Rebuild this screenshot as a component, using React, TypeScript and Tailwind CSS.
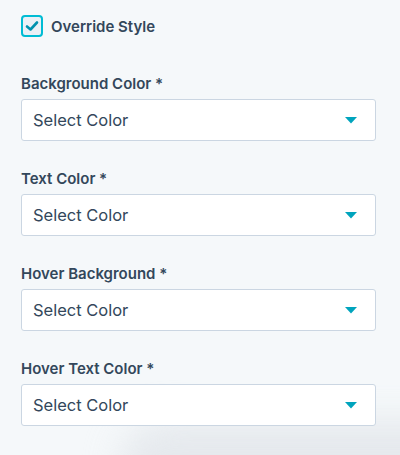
import React from "react";

const fields = ["Background Color *", "Text Color *", "Hover Background *", "Hover Text Color *"];

function Caret() {
  return (
    <svg width="12" height="7" viewBox="0 0 12 7" className="shrink-0">
      <path d="M0 0 L12 0 L6 6.5 Z" fill="#00a4bd" />
    </svg>
  );
}

export default function App() {
  return (
    <div
      className="relative w-[400px] h-[455px] overflow-hidden bg-[#f5f8fa] text-[#33475b]"
      style={{ fontFamily: "Inter, 'Open Sans', sans-serif" }}
    >
      <div className="pointer-events-none absolute left-[120px] top-[420px] w-[420px] h-[90px] rounded-full bg-[#dfe3e8] blur-[18px] opacity-70" />
      <div className="relative flex flex-col px-[21px] pt-[15px]">
        <label className="flex items-center gap-[8px] h-[22px]">
          <span className="flex items-center justify-center w-[22px] h-[22px] rounded-[4px] border-2 border-[#00bcd4] bg-[#eaf0f6]">
            <svg width="14" height="12" viewBox="0 0 14 12">
              <path d="M2 6.5 L5.5 9.5 L12 2.5" fill="none" stroke="#0091ae" strokeWidth="2.6" strokeLinecap="round" strokeLinejoin="round" />
            </svg>
          </span>
          <span className="text-[15px] font-semibold leading-none">Override Style</span>
        </label>
        <div className="flex flex-col gap-[29px] mt-[38px]">
          {fields.map((f) => (
            <div key={f} className="flex flex-col">
              <div className="text-[15px] font-semibold leading-[18px] h-[18px]">{f}</div>
              <div className="mt-[6px] flex items-center justify-between h-[42px] w-[355px] rounded-[3px] border border-[#cbd6e2] bg-white pl-[11px] pr-[18px]">
                <span className="text-[16.5px] leading-none">Select Color</span>
                <Caret />
              </div>
            </div>
          ))}
        </div>
      </div>
    </div>
  );
}
